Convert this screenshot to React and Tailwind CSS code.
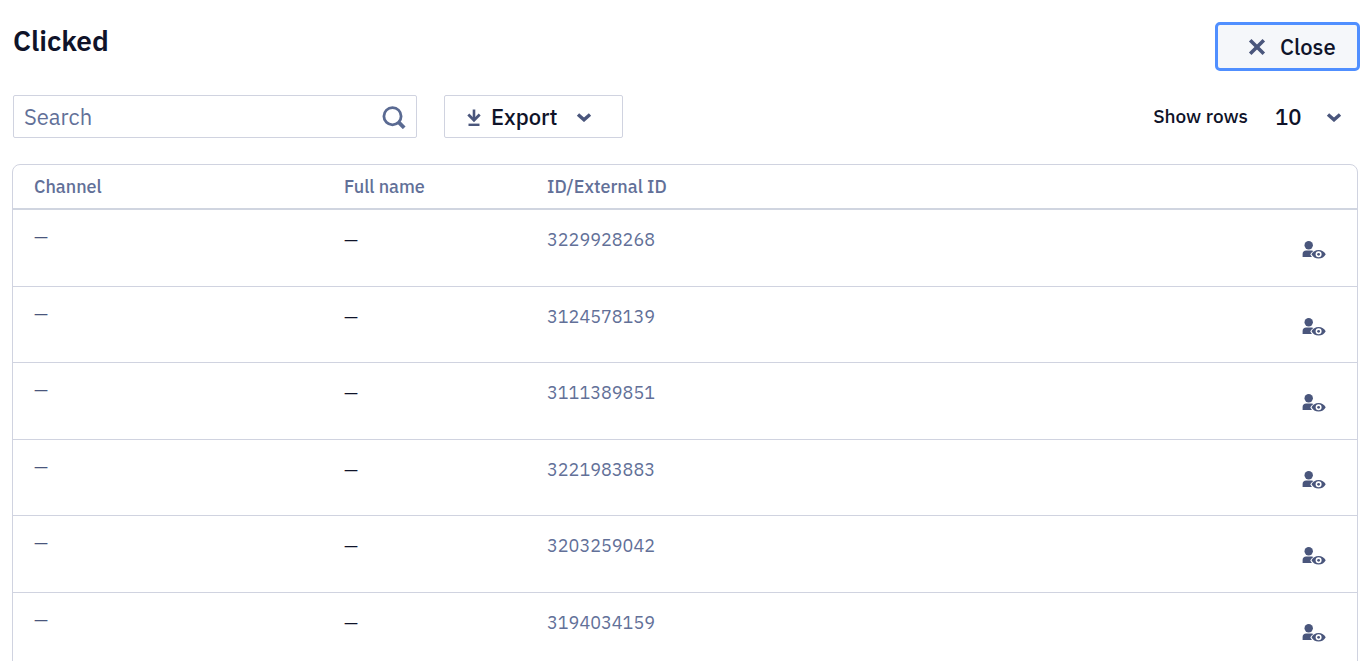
import { useState } from 'react';

const contacts = [
  { id: '3229928268' },
  { id: '3124578139' },
  { id: '3111389851' },
  { id: '3221983883' },
  { id: '3203259042' },
  { id: '3194034159' },
];

function CloseIcon({ className }) {
  return (
    <svg viewBox="0 0 18 18" className={className} fill="none" stroke="currentColor" strokeWidth="3.6" aria-hidden="true">
      <path d="M2.2 2.2l13.6 13.6M15.8 2.2L2.2 15.8" />
    </svg>
  );
}

function SearchIcon({ className }) {
  return (
    <svg viewBox="0 0 24 24" className={className} fill="none" stroke="currentColor" aria-hidden="true">
      <circle cx="10.5" cy="11.2" r="8.6" strokeWidth="2.8" />
      <path d="M16.8 17.4l5.4 5.4" strokeWidth="3.8" />
    </svg>
  );
}

function DownloadIcon({ className }) {
  return (
    <svg viewBox="0 0 14 18" className={className} fill="none" stroke="currentColor" aria-hidden="true">
      <path d="M7 1.5v10" strokeWidth="2.6" />
      <path d="M1.3 6.6L7 12.2l5.700-5.600" strokeWidth="2.8" />
      <path d="M1.500 16.800h11" strokeWidth="2.400" />
    </svg>
  );
}

function ChevronIcon({ className }) {
  return (
    <svg viewBox="0 0 16 10" className={className} fill="none" stroke="currentColor" strokeWidth="3.4" aria-hidden="true">
      <path d="M2 2.400l6 5.400 6-5.400" />
    </svg>
  );
}

function ViewProfileIcon({ className }) {
  return (
    <svg viewBox="0 0 24 20" className={className} fill="currentColor" aria-hidden="true">
      <circle cx="6.7" cy="5.2" r="4.2" />
      <path d="M4.200 10.400h5.400c.8 0 1.400.2 1.900.5-1.400.9-2.500 2-3.200 3.500.4.900 1 1.700 1.700 2.600H.6v-3c0-2.200 1.400-3.600 3.600-3.600z" />
      <path
        fillRule="evenodd"
        d="M16.600 10c3.200 0 5.800 1.600 7.100 4.300-1.300 2.700-3.900 4.300-7.100 4.300s-5.800-1.600-7.100-4.300c1.300-2.700 3.900-4.300 7.100-4.300zm0 1.300a3 3 0 1 0 0 6 3 3 0 0 0 0-6z"
      />
      <circle cx="16.600" cy="14.300" r="1.400" />
    </svg>
  );
}

export default function App() {
  const [query, setQuery] = useState('');
  const [rows, setRows] = useState('10');

  const visible = contacts.filter((contact) => contact.id.includes(query)).slice(0, Number(rows));

  return (
    <main className="h-screen overflow-hidden bg-white font-['IBM_Plex_Sans',Inter,sans-serif] text-[#0f1329]">
      <header className="flex items-start justify-between pt-[22px] pl-[13px]">
        <h1 className="text-[28px] leading-[38px] font-semibold">Clicked</h1>
        <button
          type="button"
          className="flex h-[49px] w-[145px] items-center gap-[14px] rounded-[5px] border-3 border-[#508fff] bg-[#f5f7fa] pl-[30px] text-[22px] font-medium"
        >
          <CloseIcon className="size-[18px] text-[#4a567c]" />
          Close
        </button>
      </header>

      <div className="flex items-center pt-6 pr-[18px] pl-[13px]">
        <label className="flex h-[43px] w-[404px] items-center rounded-xs border border-[#d0d3e0] pr-2.5 pl-2.5">
          <input
            type="text"
            aria-label="Search"
            placeholder="Search"
            value={query}
            onChange={(event) => setQuery(event.target.value)}
            className="min-w-0 flex-1 text-[22px] outline-none placeholder:text-[#627098]"
          />
          <SearchIcon className="size-6 text-[#5a6a92]" />
        </label>

        <button
          type="button"
          className="ml-[27px] flex h-[43px] w-[179px] items-center rounded-xs border border-[#d0d3e0] pl-[22px] text-[22px] font-medium"
        >
          <DownloadIcon className="h-[18px] w-3.5 text-[#4a567c]" />
          <span className="ml-2.5">Export</span>
          <ChevronIcon className="ml-[18px] h-2.5 w-4 text-[#4a567c]" />
        </button>

        <label htmlFor="rows" className="ml-auto text-[19px] font-medium">
          Show rows
        </label>
        <div className="relative ml-[27px] flex items-center">
          <select
            id="rows"
            value={rows}
            onChange={(event) => setRows(event.target.value)}
            className="w-[67px] appearance-none bg-transparent text-[22px] font-medium outline-none"
          >
            <option>10</option>
            <option>25</option>
            <option>50</option>
          </select>
          <ChevronIcon className="pointer-events-none absolute right-0 h-2.5 w-4 text-[#4a567c]" />
        </div>
      </div>

      <div className="pt-[26px] pr-0.5 pl-3">
        <div className="rounded-lg border border-[#d0d3e0]">
          <table className="w-full table-fixed border-separate border-spacing-0 text-left text-[18px]">
            <colgroup>
              <col className="w-[331px]" />
              <col className="w-[203px]" />
              <col />
              <col className="w-[90px]" />
            </colgroup>
            <thead className="text-[#627098]">
              <tr className="h-[45px]">
                <th className="border-b-2 border-[#d0d5e0] pl-[21px] font-medium">Channel</th>
                <th className="border-b-2 border-[#d0d5e0] font-medium">Full name</th>
                <th className="border-b-2 border-[#d0d5e0] font-medium">ID/External ID</th>
                <th className="border-b-2 border-[#d0d5e0]" aria-label="Actions" />
              </tr>
            </thead>
            <tbody>
              {visible.map((contact) => (
                <tr key={contact.id} className="h-[77px] align-top even:h-[76px]">
                  <td className="border-b border-[#d0d3e0] pt-[13px] pl-[21px] text-[#4a567c]">—</td>
                  <td className="border-b border-[#d0d3e0] pt-4">—</td>
                  <td className="border-b border-[#d0d3e0] pt-4 text-[#627098]">{contact.id}</td>
                  <td className="border-b border-[#d0d3e0] pt-[30px] pr-[31px]">
                    <button type="button" aria-label="View profile" className="ml-auto block text-[#4a567c]">
                      <ViewProfileIcon className="h-5 w-6" />
                    </button>
                  </td>
                </tr>
              ))}
            </tbody>
          </table>
        </div>
      </div>
    </main>
  );
}
